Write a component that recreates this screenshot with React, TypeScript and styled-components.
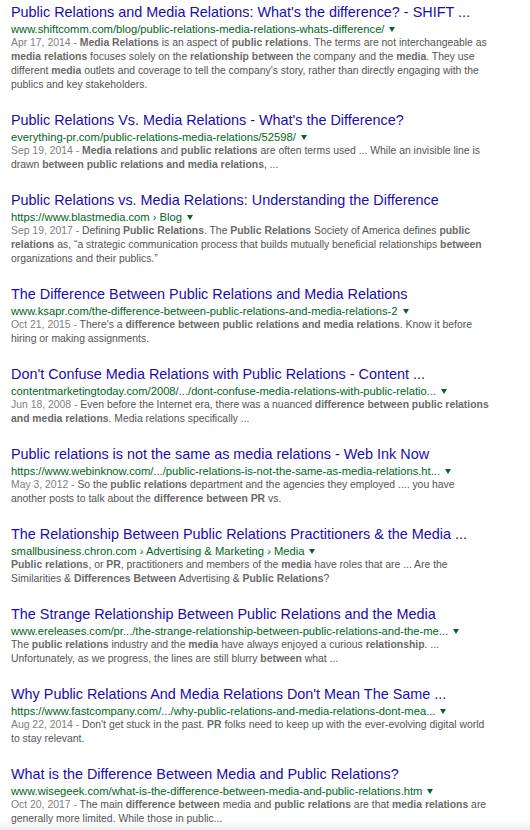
import React from "react";
import styled, { createGlobalStyle } from "styled-components";

const Global = createGlobalStyle`
  html, body { margin: 0; padding: 0; background: #fff; }
  body { font-family: Arial, "Liberation Sans", Helvetica, sans-serif; }
`;

type Result = {
  title: string;
  url: string;
  date?: string;
  snippet: string;
};

const results: Result[] = [
  {
    title: "Public Relations and Media Relations: What's the difference? - SHIFT ...",
    url: "www.shiftcomm.com/blog/public-relations-media-relations-whats-difference/",
    date: "Apr 17, 2014",
    snippet:
      "**Media Relations** is an aspect of **public relations**. The terms are not interchangeable as\n**media relations** focuses solely on the **relationship between** the company and the **media**. They use\ndifferent **media** outlets and coverage to tell the company's story, rather than directly engaging with the\npublics and key stakeholders.",
  },
  {
    title: "Public Relations Vs. Media Relations - What's the Difference?",
    url: "everything-pr.com/public-relations-media-relations/52598/",
    date: "Sep 19, 2014",
    snippet:
      "**Media relations** and **public relations** are often terms used ... While an invisible line is\ndrawn **between public relations and media relations**, ...",
  },
  {
    title: "Public Relations vs. Media Relations: Understanding the Difference",
    url: "https://www.blastmedia.com › Blog",
    date: "Sep 19, 2017",
    snippet:
      "Defining **Public Relations**. The **Public Relations** Society of America defines **public**\n**relations** as, \u201ca strategic communication process that builds mutually beneficial relationships **between**\norganizations and their publics.\u201d",
  },
  {
    title: "The Difference Between Public Relations and Media Relations",
    url: "www.ksapr.com/the-difference-between-public-relations-and-media-relations-2",
    date: "Oct 21, 2015",
    snippet:
      "There's a **difference between public relations and media relations**. Know it before\nhiring or making assignments.",
  },
  {
    title: "Don't Confuse Media Relations with Public Relations - Content ...",
    url: "contentmarketingtoday.com/2008/.../dont-confuse-media-relations-with-public-relatio...",
    date: "Jun 18, 2008",
    snippet:
      "Even before the Internet era, there was a nuanced **difference between public relations**\n**and media relations**. Media relations specifically ...",
  },
  {
    title: "Public relations is not the same as media relations - Web Ink Now",
    url: "https://www.webinknow.com/.../public-relations-is-not-the-same-as-media-relations.ht...",
    date: "May 3, 2012",
    snippet:
      "So the **public relations** department and the agencies they employed .... you have\nanother posts to talk about the **difference between PR** vs.",
  },
  {
    title: "The Relationship Between Public Relations Practitioners & the Media ...",
    url: "smallbusiness.chron.com › Advertising & Marketing › Media",
    snippet:
      "**Public relations**, or **PR**, practitioners and members of the **media** have roles that are ... Are the\nSimilarities & **Differences Between** Advertising & **Public Relations**?",
  },
  {
    title: "The Strange Relationship Between Public Relations and the Media",
    url: "www.ereleases.com/pr.../the-strange-relationship-between-public-relations-and-the-me...",
    snippet:
      "The **public relations** industry and the **media** have always enjoyed a curious **relationship**. ...\nUnfortunately, as we progress, the lines are still blurry **between** what ...",
  },
  {
    title: "Why Public Relations And Media Relations Don't Mean The Same ...",
    url: "https://www.fastcompany.com/.../why-public-relations-and-media-relations-dont-mea...",
    date: "Aug 22, 2014",
    snippet:
      "Don't get stuck in the past. **PR** folks need to keep up with the ever-evolving digital world\nto stay relevant.",
  },
  {
    title: "What is the Difference Between Media and Public Relations?",
    url: "www.wisegeek.com/what-is-the-difference-between-media-and-public-relations.htm",
    date: "Oct 20, 2017",
    snippet:
      "The main **difference between** media and **public relations** are that **media relations** are\ngenerally more limited. While those in public...",
  },
];

const Page = styled.main`
  display: flex;
  flex-direction: column;
  gap: 18px;
  padding: 2px 0 0 11px;
`;

const Item = styled.article`
  display: flex;
  flex-direction: column;
`;

const Title = styled.a`
  font-size: 14.4px;
  line-height: 20px;
  color: #1a0dab;
  text-decoration: none;
  white-space: nowrap;
`;

const UrlRow = styled.div`
  display: flex;
  align-items: center;
  gap: 5px;
  height: 14px;
`;

const Cite = styled.cite`
  font-style: normal;
  font-size: 11.2px;
  line-height: 14px;
  color: #006621;
  white-space: nowrap;
`;

const Caret = styled.span`
  width: 0;
  height: 0;
  border-left: 3.5px solid transparent;
  border-right: 3.5px solid transparent;
  border-top: 5px solid #006621;
  margin-top: 1px;
`;

const Snippet = styled.div`
  display: flex;
  flex-direction: column;
  font-size: 10.4px;
  line-height: 14px;
  color: #545454;
`;

const Line = styled.span`
  white-space: nowrap;
`;

const DateText = styled.span`
  color: #808080;
`;

const Em = styled.b`
  font-weight: bold;
  color: #6a6a6a;
`;

const BottomShade = styled.div`
  position: fixed;
  left: 0;
  right: 0;
  bottom: 0;
  height: 10px;
  background: linear-gradient(to bottom, rgba(0,0,0,0), rgba(0,0,0,0.07));
  pointer-events: none;
`;

function renderBold(s: string) {
  return s
    .split("**")
    .map((p, i) => (i % 2 === 1 ? <Em key={i}>{p}</Em> : <React.Fragment key={i}>{p}</React.Fragment>));
}

export default function App() {
  return (
    <>
      <Global />
      <Page>
        {results.map((r, i) => (
          <Item key={i}>
            <Title href="#">{r.title}</Title>
            <UrlRow>
              <Cite>{r.url}</Cite>
              <Caret />
            </UrlRow>
            <Snippet>
              {r.snippet.split("\n").map((line, j) => (
                <Line key={j}>
                  {j === 0 && r.date && <DateText>{r.date} - </DateText>}
                  {renderBold(line)}
                </Line>
              ))}
            </Snippet>
          </Item>
        ))}
      </Page>
      <BottomShade />
    </>
  );
}
